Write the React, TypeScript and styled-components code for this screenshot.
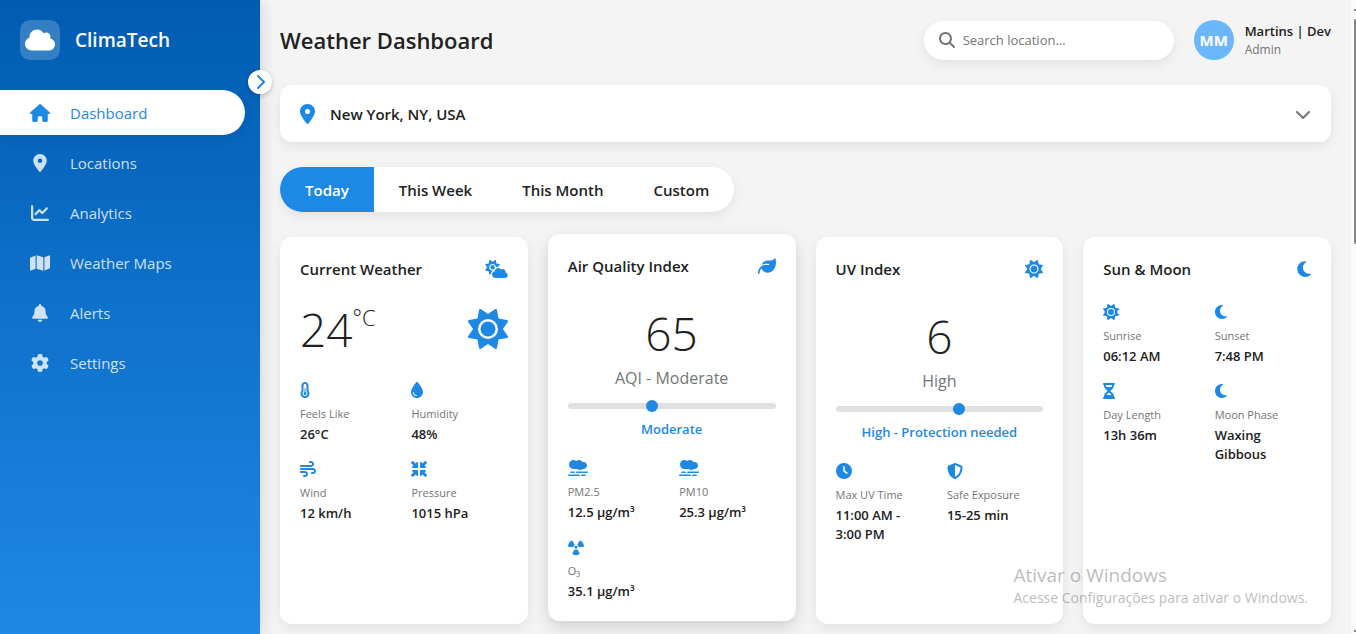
import React from 'react';
import styled, { createGlobalStyle, css } from 'styled-components';
import type { IconType } from 'react-icons';
import {
  FaBell, FaChartLine, FaChevronDown, FaChevronRight, FaClock, FaCloud, FaCloudSun,
  FaDroplet, FaGear, FaHourglassHalf, FaHouse, FaLeaf, FaLocationDot, FaMagnifyingGlass,
  FaMap, FaMinimize, FaMoon, FaRadiation, FaShieldHalved, FaSmog, FaSun,
  FaTemperatureHalf, FaWind,
} from 'react-icons/fa6';

const color = {
  primary: '#1e88e5',
  primaryDark: '#005cb2',
  primaryLight: '#6ab7ff',
  page: '#f4f4f4',
  card: '#ffffff',
  text: '#212121',
  muted: '#757575',
  track: '#e0e0e0',
};

const softShadow = '0 4px 12px rgba(0, 0, 0, 0.08)';

const GlobalStyle = createGlobalStyle`
  *, *::before, *::after { box-sizing: border-box; margin: 0; padding: 0; }
  body {
    background: ${color.page};
    color: ${color.text};
    font-family: 'Segoe UI', 'Open Sans', 'Noto Sans', sans-serif;
    font-size: 15px;
  }
  button, input, select { font: inherit; color: inherit; border: 0; background: none; }
  svg { display: block; flex: none; }
`;

const IconFrame = styled.span<{ $height: number; $width: number; $color: string }>`
  display: inline-flex;
  align-items: center;
  color: ${p => p.$color};
  svg {
    height: ${p => p.$height}px;
    width: ${p => p.$width}px;
  }
`;

/* Glyphs whose view box is not square: width in units of a 512 height. */
const glyphWidths = new Map<IconType, number>([
  [FaCloud, 640], [FaCloudSun, 640], [FaSmog, 640],
  [FaHouse, 576], [FaMap, 576], [FaBell, 448],
  [FaLocationDot, 384], [FaMoon, 384], [FaDroplet, 384], [FaHourglassHalf, 384],
  [FaTemperatureHalf, 320], [FaChevronRight, 320],
]);

type IconProps = { of: IconType; size: number; tint?: string };

function Icon({ of: Glyph, size, tint = color.primary }: IconProps) {
  const width = Math.round((size * (glyphWidths.get(Glyph) ?? 512)) / 512);
  return (
    <IconFrame $height={size} $width={width} $color={tint}>
      <Glyph />
    </IconFrame>
  );
}

const Page = styled.div`
  position: relative;
  display: grid;
  grid-template-columns: 260px minmax(0, 1fr) 5px;
  min-height: 100vh;
`;

/* Sidebar */

const Sidebar = styled.aside`
  position: relative;
  z-index: 1;
  background: linear-gradient(to bottom, ${color.primaryDark}, ${color.primary});
  box-shadow: 4px 0 12px rgba(0, 0, 0, 0.1);
  color: #fff;
`;

const Brand = styled.div`
  display: flex;
  align-items: center;
  gap: 15px;
  padding: 20px;
  margin-bottom: 10px;
`;

const BrandMark = styled.div`
  display: grid;
  place-items: center;
  width: 40px;
  height: 40px;
  border-radius: 10px;
  background: rgba(255, 255, 255, 0.2);
`;

const BrandName = styled.span`
  font-size: 19px;
  font-weight: 600;
`;

const Collapse = styled.button`
  position: absolute;
  top: 70px;
  right: -12px;
  display: grid;
  place-items: center;
  width: 24px;
  height: 24px;
  border-radius: 50%;
  background: #fff;
  box-shadow: 0 2px 5px rgba(0, 0, 0, 0.2);
  cursor: pointer;
`;

const NavList = styled.ul`
  display: grid;
  gap: 5px;
  list-style: none;
`;

const NavLink = styled.a<{ $active?: boolean }>`
  display: flex;
  align-items: center;
  gap: 20px;
  height: 45px;
  margin-right: 15px;
  padding-left: 30px;
  border-radius: 0 30px 30px 0;
  color: rgba(255, 255, 255, 0.8);
  text-decoration: none;
  ${p => p.$active && css`
    background: #fff;
    color: ${color.primary};
    box-shadow: ${softShadow};
  `}
`;

const NavIcon = styled.span`
  display: flex;
  justify-content: center;
  width: 20px;
`;

/* Main column */

const Main = styled.main`
  display: flex;
  flex-direction: column;
  gap: 25px;
  padding: 20px 20px 10px;
`;

const TopBar = styled.header`
  display: flex;
  align-items: center;
  gap: 20px;
  height: 40px;
`;

const PageTitle = styled.h1`
  flex: 1;
  font-size: 22px;
  font-weight: 600;
`;

const SearchBox = styled.label`
  display: flex;
  align-items: center;
  gap: 8px;
  width: 250px;
  height: 39px;
  padding: 0 15px;
  border-radius: 20px;
  background: ${color.card};
  box-shadow: ${softShadow};
`;

const SearchInput = styled.input`
  flex: 1;
  min-width: 0;
  font-size: 13px;
  outline: none;
  &::placeholder { color: ${color.muted}; opacity: 1; }
`;

const Profile = styled.div`
  display: flex;
  align-items: center;
  gap: 11px;
`;

const Avatar = styled.span`
  display: grid;
  place-items: center;
  width: 40px;
  height: 40px;
  border-radius: 50%;
  background: ${color.primaryLight};
  color: #fff;
  font-weight: 700;
`;

const ProfileName = styled.div`
  font-size: 13px;
  font-weight: 600;
  line-height: 19px;
`;

const ProfileRole = styled.div`
  font-size: 12px;
  line-height: 17px;
  color: ${color.muted};
`;

const LocationBar = styled.label`
  display: flex;
  align-items: center;
  gap: 15px;
  height: 57px;
  padding: 0 20px;
  border-radius: 12px;
  background: ${color.card};
  box-shadow: ${softShadow};
`;

const LocationSelect = styled.select`
  flex: 1;
  appearance: none;
  font-weight: 600;
  outline: none;
`;

const Tabs = styled.div`
  display: flex;
  align-self: flex-start;
  height: 45px;
  border-radius: 30px;
  background: ${color.card};
  box-shadow: ${softShadow};
  overflow: hidden;
`;

const Tab = styled.button<{ $active?: boolean }>`
  padding: 0 25px;
  font-weight: 600;
  cursor: pointer;
  ${p => p.$active && css`
    background: ${color.primary};
    color: #fff;
  `}
`;

/* Cards */

const Cards = styled.section`
  display: grid;
  grid-template-columns: repeat(auto-fit, minmax(240px, 1fr));
  gap: 20px;
`;

const CardBox = styled.article<{ $raised?: boolean }>`
  padding: 20px;
  border-radius: 12px;
  background: ${color.card};
  box-shadow: ${softShadow};
  ${p => p.$raised && css`
    transform: translateY(-3px);
    box-shadow: 0 6px 16px rgba(0, 0, 0, 0.15);
  `}
`;

const CardHead = styled.div`
  display: flex;
  align-items: center;
  justify-content: space-between;
  height: 24px;
  margin-bottom: 21px;
`;

const CardTitle = styled.h2`
  font-size: 15px;
  font-weight: 600;
`;

const WeatherNow = styled.div`
  display: flex;
  align-items: center;
  justify-content: space-between;
  height: 54px;
  margin-bottom: 24px;
`;

const BigNumber = styled.div`
  font-size: 46px;
  font-weight: 300;
  line-height: 48px;
`;

const Temperature = styled(BigNumber)`
  display: flex;
  align-items: flex-start;
`;

const Unit = styled.span`
  font-size: 22px;
  line-height: 24px;
`;

const Gauge = styled.div`
  display: flex;
  flex-direction: column;
  align-items: center;
  padding-top: 10px;
  margin-bottom: 18px;
`;

const GaugeLabel = styled.div`
  margin: 10px 0 14px;
  font-size: 16px;
  line-height: 22px;
  color: ${color.muted};
`;

const thumb = css`
  width: 12px;
  height: 12px;
  border: 0;
  border-radius: 50%;
  background: ${color.primary};
`;

const GaugeSlider = styled.input`
  appearance: none;
  display: block;
  width: 100%;
  height: 6px;
  border-radius: 3px;
  background: ${color.track};
  &::-webkit-slider-thumb { appearance: none; ${thumb} }
  &::-moz-range-thumb { ${thumb} }
`;

const GaugeStatus = styled.div`
  margin-top: 10px;
  font-size: 13px;
  font-weight: 600;
  line-height: 21px;
  color: ${color.primary};
`;

const DetailGrid = styled.dl`
  display: grid;
  grid-template-columns: 1fr 1fr;
  gap: 15px;
`;

const DetailIcon = styled.div`
  display: flex;
  align-items: center;
  height: 20px;
  margin-bottom: 6px;
`;

const DetailLabel = styled.dt`
  margin-bottom: 3px;
  font-size: 11px;
  line-height: 16px;
  color: ${color.muted};
`;

const DetailValue = styled.dd`
  font-size: 13px;
  font-weight: 600;
  line-height: 19px;
`;

/* Scroll rail and system notice */

const Rail = styled.div`
  display: flex;
  flex-direction: column;
  align-items: flex-end;
  justify-content: space-between;
  padding: 9px 0 2px;
  background: #fcfcfc;
`;

const RailArrow = styled.span`
  width: 2px;
  height: 2px;
  background: #858585;
`;

const RailTrack = styled.div`
  flex: 1;
  padding: 8px 0;
`;

const RailThumb = styled.div`
  width: 2px;
  height: 225px;
  border-radius: 2px 0 0 2px;
  background: #858585;
`;

const SystemNotice = styled.div`
  position: absolute;
  right: 48px;
  bottom: 26px;
  z-index: 2;
  color: rgba(120, 120, 120, 0.5);
  pointer-events: none;
`;

const NoticeTitle = styled.div`
  font-size: 19px;
  line-height: 26px;
`;

const NoticeText = styled.div`
  font-size: 14px;
  line-height: 20px;
`;

type Detail = { icon: IconType; label: string; value: string };

const navItems: { icon: IconType; label: string }[] = [
  { icon: FaHouse, label: 'Dashboard' },
  { icon: FaLocationDot, label: 'Locations' },
  { icon: FaChartLine, label: 'Analytics' },
  { icon: FaMap, label: 'Weather Maps' },
  { icon: FaBell, label: 'Alerts' },
  { icon: FaGear, label: 'Settings' },
];

const periods = ['Today', 'This Week', 'This Month', 'Custom'];

const weather: Detail[] = [
  { icon: FaTemperatureHalf, label: 'Feels Like', value: '26°C' },
  { icon: FaDroplet, label: 'Humidity', value: '48%' },
  { icon: FaWind, label: 'Wind', value: '12 km/h' },
  { icon: FaMinimize, label: 'Pressure', value: '1015 hPa' },
];

const air: Detail[] = [
  { icon: FaSmog, label: 'PM2.5', value: '12.5 µg/m³' },
  { icon: FaSmog, label: 'PM10', value: '25.3 µg/m³' },
  { icon: FaRadiation, label: 'O₃', value: '35.1 µg/m³' },
];

const uv: Detail[] = [
  { icon: FaClock, label: 'Max UV Time', value: '11:00 AM - 3:00\u00a0PM' },
  { icon: FaShieldHalved, label: 'Safe Exposure', value: '15-25 min' },
];

const astro: Detail[] = [
  { icon: FaSun, label: 'Sunrise', value: '06:12 AM' },
  { icon: FaMoon, label: 'Sunset', value: '7:48 PM' },
  { icon: FaHourglassHalf, label: 'Day Length', value: '13h 36m' },
  { icon: FaMoon, label: 'Moon Phase', value: 'Waxing Gibbous' },
];

function Details({ items }: { items: Detail[] }) {
  return (
    <DetailGrid>
      {items.map(({ icon, label, value }) => (
        <div key={label}>
          <DetailIcon><Icon of={icon} size={16} /></DetailIcon>
          <DetailLabel>{label}</DetailLabel>
          <DetailValue>{value}</DetailValue>
        </div>
      ))}
    </DetailGrid>
  );
}

type CardProps = { title: string; icon: IconType; raised?: boolean; children: React.ReactNode };

function Card({ title, icon, raised, children }: CardProps) {
  return (
    <CardBox $raised={raised}>
      <CardHead>
        <CardTitle>{title}</CardTitle>
        <Icon of={icon} size={18} />
      </CardHead>
      {children}
    </CardBox>
  );
}

type MeterProps = { name: string; value: string; label: string; percent: number; status: string };

function Meter({ name, value, label, percent, status }: MeterProps) {
  return (
    <Gauge>
      <BigNumber>{value}</BigNumber>
      <GaugeLabel>{label}</GaugeLabel>
      <GaugeSlider type="range" min={0} max={100} defaultValue={percent} aria-label={name} />
      <GaugeStatus>{status}</GaugeStatus>
    </Gauge>
  );
}

export default function App() {
  return (
    <>
      <GlobalStyle />
      <Page>
        <Sidebar>
          <Brand>
            <BrandMark><Icon of={FaCloud} size={24} tint="#fff" /></BrandMark>
            <BrandName>ClimaTech</BrandName>
          </Brand>
          <Collapse type="button" aria-label="Toggle sidebar">
            <Icon of={FaChevronRight} size={16} />
          </Collapse>
          <nav>
            <NavList>
              {navItems.map(({ icon, label }, i) => (
                <li key={label}>
                  <NavLink href="#" $active={i === 0}>
                    <NavIcon><Icon of={icon} size={18} tint="currentColor" /></NavIcon>
                    {label}
                  </NavLink>
                </li>
              ))}
            </NavList>
          </nav>
        </Sidebar>

        <Main>
          <TopBar>
            <PageTitle>Weather Dashboard</PageTitle>
            <SearchBox>
              <Icon of={FaMagnifyingGlass} size={16} tint={color.muted} />
              <SearchInput type="text" placeholder="Search location..." aria-label="Search location" />
            </SearchBox>
            <Profile>
              <Avatar>MM</Avatar>
              <div>
                <ProfileName>Martins | Dev</ProfileName>
                <ProfileRole>Admin</ProfileRole>
              </div>
            </Profile>
          </TopBar>

          <LocationBar>
            <Icon of={FaLocationDot} size={20} />
            <LocationSelect aria-label="Location">
              <option>New York, NY, USA</option>
            </LocationSelect>
            <Icon of={FaChevronDown} size={16} tint={color.muted} />
          </LocationBar>

          <Tabs>
            {periods.map((period, i) => (
              <Tab key={period} type="button" $active={i === 0}>{period}</Tab>
            ))}
          </Tabs>

          <Cards>
            <Card title="Current Weather" icon={FaCloudSun}>
              <WeatherNow>
                <Temperature>24<Unit>°C</Unit></Temperature>
                <Icon of={FaSun} size={40} />
              </WeatherNow>
              <Details items={weather} />
            </Card>
            <Card title="Air Quality Index" icon={FaLeaf} raised>
              <Meter name="Air quality" value="65" label="AQI - Moderate" percent={40} status="Moderate" />
              <Details items={air} />
            </Card>
            <Card title="UV Index" icon={FaSun}>
              <Meter name="UV level" value="6" label="High" percent={60} status="High - Protection needed" />
              <Details items={uv} />
            </Card>
            <Card title="Sun & Moon" icon={FaMoon}>
              <Details items={astro} />
            </Card>
          </Cards>
        </Main>

        <Rail aria-hidden="true">
          <RailArrow />
          <RailTrack><RailThumb /></RailTrack>
          <RailArrow />
        </Rail>

        <SystemNotice>
          <NoticeTitle>Ativar o Windows</NoticeTitle>
          <NoticeText>Acesse Configurações para ativar o Windows.</NoticeText>
        </SystemNotice>
      </Page>
    </>
  );
}
